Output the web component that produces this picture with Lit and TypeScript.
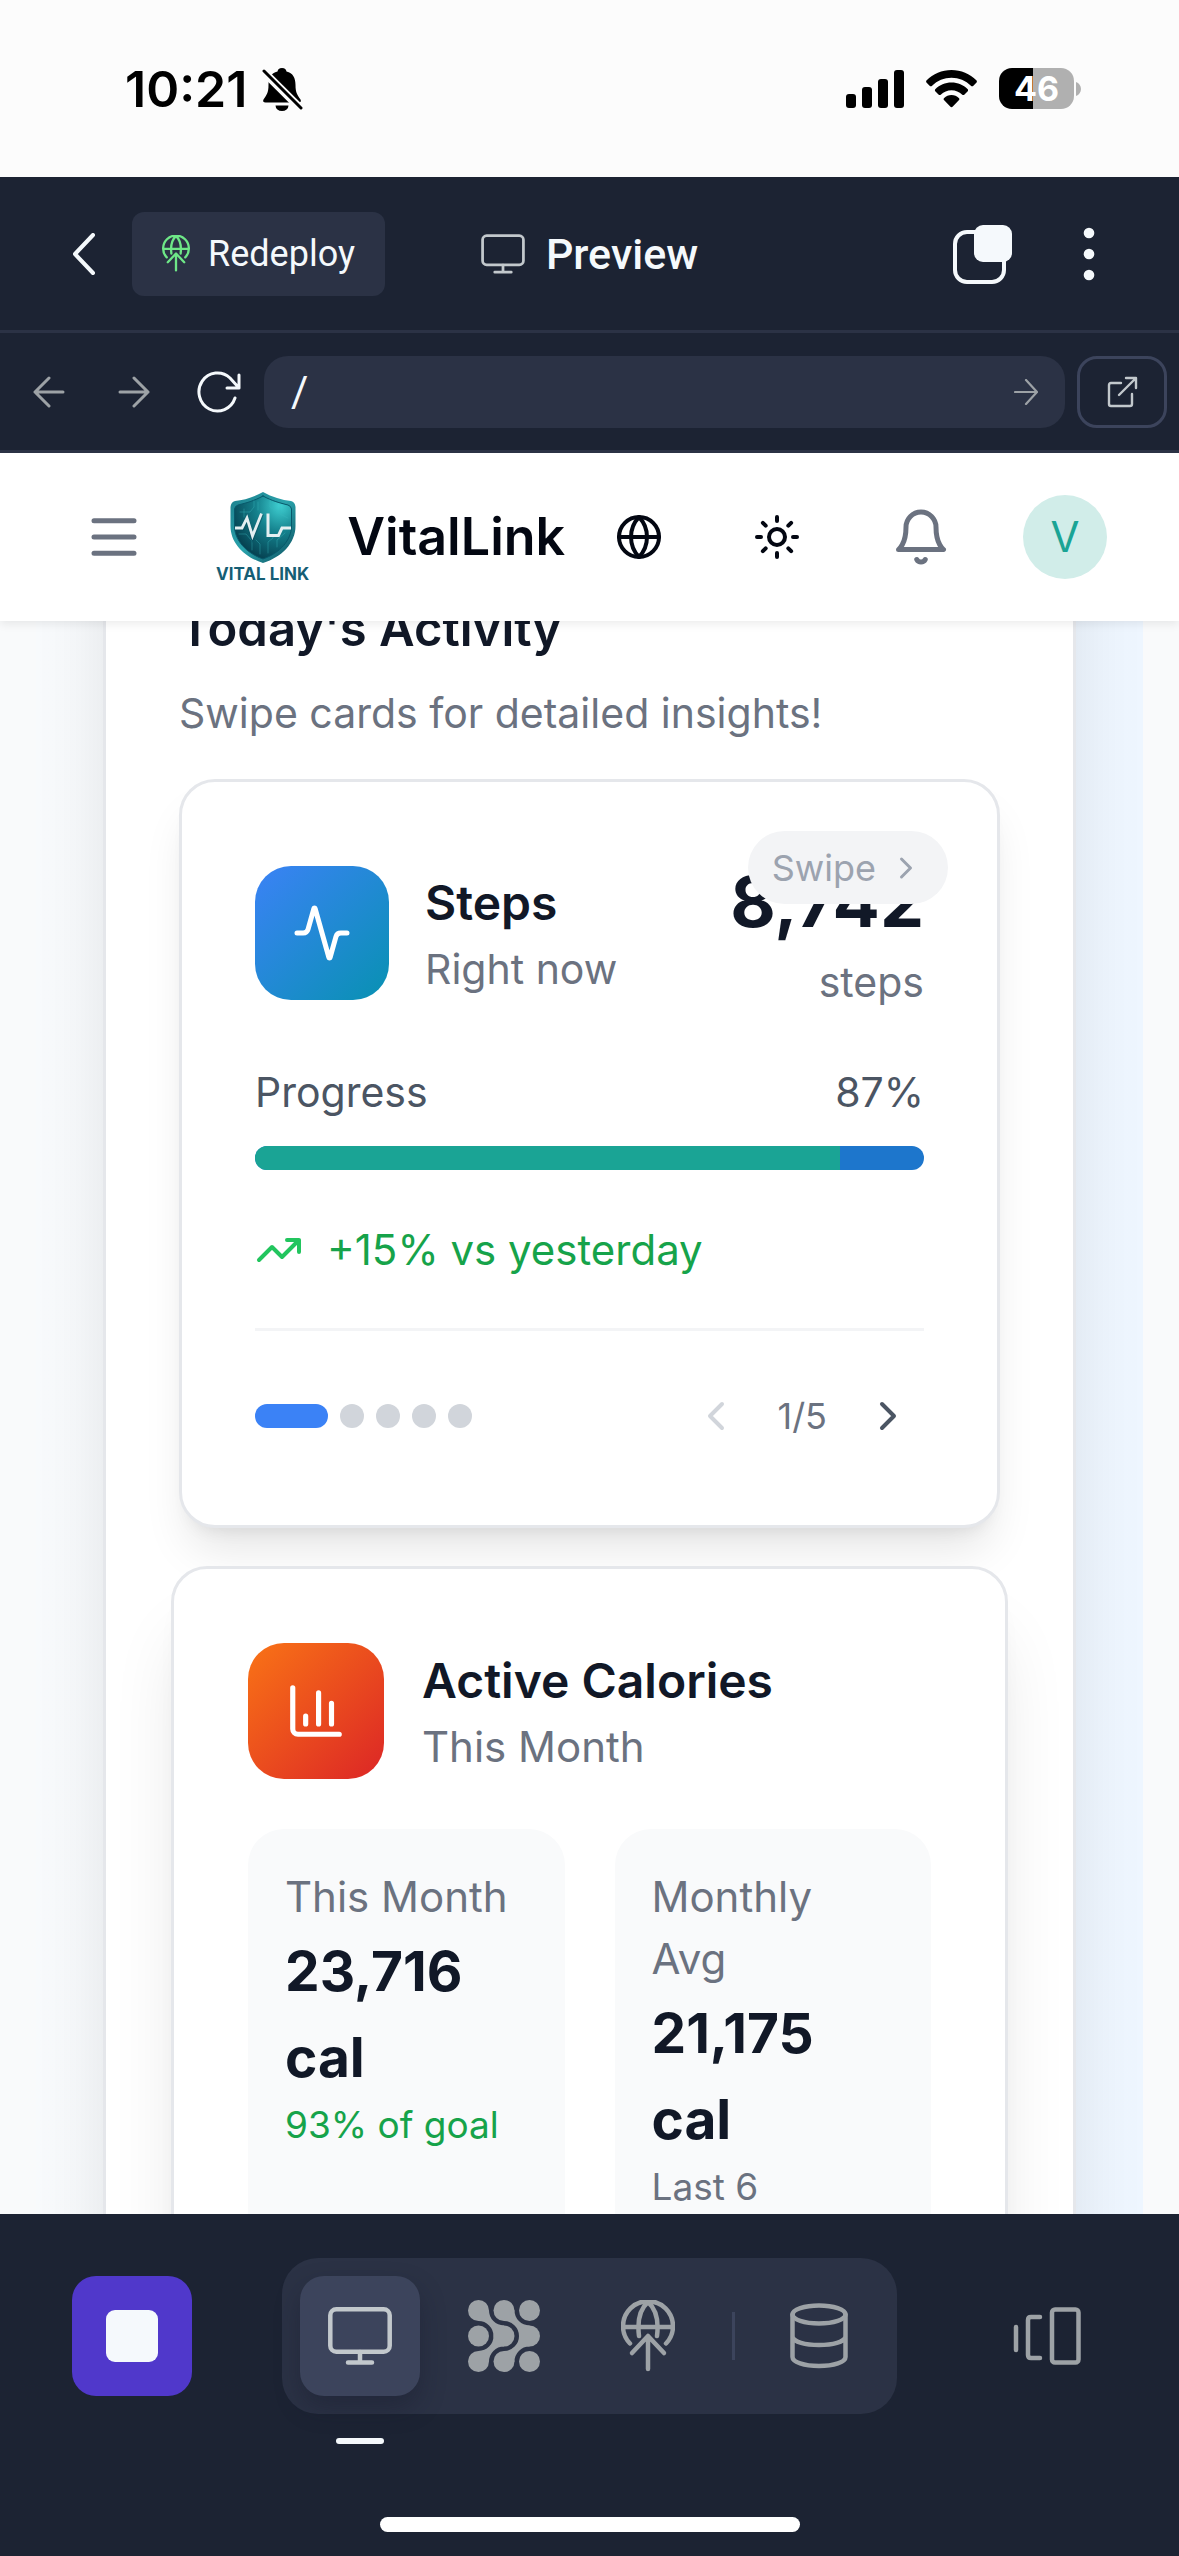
import { LitElement, html, css, svg } from "lit";
import { customElement, property, state } from "lit/decorators.js";
import { classMap } from "lit/directives/class-map.js";

const deployGlyph = svg`
  <path d="M9 43.500A25 25 0 1 1 45 43.500M2 27H52M27 2C19 9 16 20 18 36M27 2C35 9 38 20 36 36"/>
  <path d="M27 38V69M11 53L27 36L43 53"/>
`;

const monitorGlyph = svg`
  <rect x="2.300" y="2.300" width="59.400" height="42.400" rx="6"/>
  <path d="M32 45V55M20 55.500H44"/>
`;

/** Operating system clock, signal and battery line. */
@customElement("status-line")
export class StatusLine extends LitElement {
  @property() time = "10:21";
  @property({ type: Number }) battery = 46;

  static styles = css`
    :host { display: block; background: #fcfcfc; color: #000; font-family: Inter, "Liberation Sans", sans-serif; }
    .bar { display: flex; align-items: center; justify-content: space-between; height: 177px; padding: 0 98px 0 125px; box-sizing: border-box; }
    .side { display: flex; align-items: center; }
    .clock { font-size: 50px; line-height: 60px; font-weight: 600; }
    .mute { margin-left: 14px; }
    .signals { gap: 22px; }
    .cell { display: flex; align-items: center; gap: 2px; }
    .charge { width: 75px; height: 41px; border-radius: 13px; color: #fff; font-size: 34px; line-height: 41px; font-weight: 700; text-align: center; }
    svg { display: block; }
  `;

  render() {
    const edge = `${this.battery}%`;
    return html`
      <div class="bar">
        <div class="side">
          <span class="clock">${this.time}</span>
          <svg class="mute" width="42" height="44" viewBox="0 0 42 44" aria-hidden="true">
            <path d="M21 1c-3 0-4 1.500-4.500 3.500C10 6 7.500 11 7.500 18c0 8-2 10-5 14.500-1 2 0 3 2 3h33c2 0 3-1 2-3-3-4.500-5-6.500-5-14.500 0-7-2.500-12-9-13.500C25 2.500 24 1 21 1zM14.500 38.500a6.500 5.500 0 0 0 13 0z"/>
            <path d="M2 4L40 42" stroke="#fcfcfc" stroke-width="8"/>
            <path d="M3 4L40 41" stroke="#000" stroke-width="3" stroke-linecap="round"/>
          </svg>
        </div>
        <div class="side signals">
          <svg width="58" height="38" viewBox="0 0 58 38" aria-hidden="true">
            <rect x="0" y="24" width="10" height="14" rx="3"/>
            <rect x="16" y="17" width="10" height="21" rx="3"/>
            <rect x="32" y="9" width="10" height="29" rx="3"/>
            <rect x="48" y="0" width="10" height="38" rx="3"/>
          </svg>
          <svg width="51" height="38" viewBox="0 0 51 38" aria-hidden="true">
            <path d="M25.500 0C35 0 44 4 50.300 10.300c.8.800.8 1.700 0 2.500l-2.900 2.900c-.8.800-1.700.8-2.500 0C39.700 10.500 32.900 7.700 25.500 7.700S11.300 10.500 6.100 15.700c-.8.800-1.700.8-2.500 0L.7 12.800c-.8-.8-.8-1.700 0-2.500C7 4 16 0 25.500 0z"/>
            <path d="M25.500 12.500c6.300 0 12 2.500 16 6.500.8.800.8 1.700 0 2.500l-3 3c-.8.800-1.700.8-2.500 0-2.700-2.700-6.400-4.300-10.500-4.300S17.700 21.800 15 24.500c-.8.800-1.700.8-2.500 0l-3-3c-.8-.8-.8-1.700 0-2.500 4-4 9.700-6.500 16-6.500z"/>
            <path d="M25.500 25c2.900 0 5.400 1 7.300 2.900.8.800.8 1.600 0 2.400l-6 6.300c-.8.900-1.800.9-2.600 0l-6-6.300c-.8-.8-.8-1.600 0-2.400C20.100 26 22.600 25 25.500 25z"/>
          </svg>
          <div class="cell">
            <div class="charge" style="background:linear-gradient(90deg,#000 ${edge},#b0b0b0 ${edge})">${this.battery}</div>
            <svg width="5" height="14" viewBox="0 0 5 14" aria-hidden="true"><path fill="#b0b0b0" d="M0 0C3 1 5 4 5 7S3 13 0 14z"/></svg>
          </div>
        </div>
      </div>
    `;
  }
}

/** Workspace title row and browser address row. */
@customElement("preview-chrome")
export class PreviewChrome extends LitElement {
  @state() private path = "/";

  static styles = css`
    :host { display: block; background: #1c2333; color: #f5f9fc; font-family: Roboto, "Liberation Sans", sans-serif; }
    button, input, a { font: inherit; color: inherit; margin: 0; padding: 0; border: 0; background: none; }
    button { display: flex; align-items: center; justify-content: center; cursor: pointer; }
    svg { display: block; fill: none; stroke: currentColor; stroke-linecap: round; stroke-linejoin: round; }
    .titles { display: grid; grid-template-columns: 1fr auto 1fr; align-items: center; height: 156px; box-sizing: border-box; padding: 0 72px; border-bottom: 3px solid #2b3245; }
    .lead { display: flex; align-items: center; gap: 36px; }
    .redeploy { gap: 18px; height: 84px; padding: 0 30px; border-radius: 12px; background: #2b3245; font-size: 36px; line-height: 48px; }
    .redeploy svg { color: #6ee787; }
    .title { display: flex; align-items: center; gap: 21px; margin: 0; font-size: 43px; line-height: 54px; font-weight: 500; }
    .title svg { color: #c2c8cc; }
    .tail { display: flex; align-items: center; justify-content: flex-end; gap: 70px; padding-right: 12px; }
    .address { display: flex; align-items: center; height: 120px; box-sizing: border-box; padding: 0 12px 0 6px; border-bottom: 3px solid #2b3245; }
    .nav { width: 85px; height: 72px; }
    .dim { color: #9da2a6; }
    .field { flex: 1; display: flex; align-items: center; height: 72px; margin: 0 12px 0 3px; border-radius: 24px; background: #2b3245; }
    .path { flex: 1; min-width: 0; height: 72px; padding-left: 27px; font-size: 42px; outline: none; }
    .go { width: 78px; height: 72px; }
    .open { display: flex; align-items: center; justify-content: center; width: 90px; height: 72px; box-sizing: border-box; border: 3px solid #3c445c; border-radius: 20px; color: #c2c8cc; }
  `;

  render() {
    return html`
      <header class="titles">
        <div class="lead">
          <button aria-label="Back"><svg width="24" height="42" viewBox="0 0 24 42" stroke-width="4"><path d="M21 2L3 21L21 40"/></svg></button>
          <button class="redeploy">
            <svg width="28" height="37" viewBox="0 0 54 72" stroke-width="4.500">${deployGlyph}</svg>
            Redeploy
          </button>
        </div>
        <h1 class="title">
          <svg width="44" height="40" viewBox="0 0 64 58" stroke-width="4">${monitorGlyph}</svg>
          Preview
        </h1>
        <div class="tail">
          <button aria-label="Windows">
            <svg width="60" height="60" viewBox="0 0 60 60">
              <rect x="2" y="8" width="49" height="50" rx="12" stroke-width="4"/>
              <rect x="21" y="1" width="38" height="37" rx="9" fill="currentColor" stroke="none"/>
            </svg>
          </button>
          <button aria-label="More">
            <svg width="12" height="54" viewBox="0 0 12 54">
              <g fill="currentColor" stroke="none"><circle cx="6" cy="6" r="5.300"/><circle cx="6" cy="27" r="5.300"/><circle cx="6" cy="48" r="5.300"/></g>
            </svg>
          </button>
        </div>
      </header>
      <nav class="address">
        <button class="nav dim" aria-label="Go back"><svg width="32" height="32" viewBox="0 0 32 32" stroke-width="3"><path d="M30 16H2M16 2L2 16L16 30"/></svg></button>
        <button class="nav dim" aria-label="Go forward"><svg width="32" height="32" viewBox="0 0 32 32" stroke-width="3"><path d="M2 16H30M16 2L30 16L16 30"/></svg></button>
        <button class="nav" aria-label="Reload"><svg width="44" height="42" viewBox="0 0 44 42" stroke-width="3"><path d="M38 27A18.500 19 0 1 1 33 7L42 17M42 4V17H30"/></svg></button>
        <form class="field" @submit=${(e: Event) => e.preventDefault()}>
          <input class="path" aria-label="Path" .value=${this.path} @input=${(e: Event) => (this.path = (e.target as HTMLInputElement).value)} />
          <button class="go dim" aria-label="Go"><svg width="24" height="26" viewBox="0 0 24 26" stroke-width="2.200"><path d="M1 13H23M12 1L23 13L12 25"/></svg></button>
        </form>
        <a class="open" href="/" aria-label="Open in new tab"><svg width="32" height="32" viewBox="0 0 32 32" stroke-width="2.400"><path d="M15 7H5Q3 7 3 9V28Q3 30 5 30H24Q26 30 26 28V18M13 19L30 2M20 2H30V12"/></svg></a>
      </nav>
    `;
  }
}

/** Tool switcher at the foot of the workspace. */
@customElement("tool-dock")
export class ToolDock extends LitElement {
  @state() private active = "preview";

  static styles = css`
    :host { display: block; background: #1c2333; color: #9da2a6; }
    button { display: flex; align-items: center; justify-content: center; width: 120px; height: 120px; margin: 0; padding: 0; border: 0; border-radius: 24px; background: none; color: inherit; cursor: pointer; }
    svg { display: block; fill: none; stroke: currentColor; stroke-width: 4.500px; stroke-linecap: round; stroke-linejoin: round; }
    .row { display: flex; align-items: center; gap: 90px; padding: 44px 72px 0; }
    .stop { background: #5038cb; }
    .stop svg { fill: #f5f9fc; stroke: none; }
    .tabs { display: flex; align-items: center; gap: 24px; padding: 18px; border-radius: 36px; background: #2b3245; }
    .tab { position: relative; }
    .tab.on { background: #3c445c; color: #c2c8cc; box-shadow: 0 12px 24px rgba(20, 24, 40, 0.35); }
    .tab.on::after { content: ""; position: absolute; left: 36px; right: 36px; bottom: -48px; height: 6px; border-radius: 3px; background: #f5f9fc; }
    .rule { width: 3px; height: 48px; background: #3c445c; }
    .layout { margin-left: auto; }
    .home { width: 420px; max-width: 60%; height: 15px; border-radius: 8px; background: #fff; margin: 103px auto 24px; }
    .solid { fill: currentColor; stroke: none; }
  `;

  private tab(id: string, label: string, art: unknown) {
    return html`<button class=${classMap({ tab: true, on: this.active === id })} aria-label=${label} @click=${() => (this.active = id)}>${art}</button>`;
  }

  render() {
    return html`
      <div class="row">
        <button class="stop" aria-label="Stop"><svg width="52" height="52" viewBox="0 0 52 52"><rect width="52" height="52" rx="9"/></svg></button>
        <div class="tabs">
          ${this.tab("preview", "Preview", html`<svg width="64" height="58" viewBox="0 0 64 58">${monitorGlyph}</svg>`)}
          ${this.tab("agent", "Agent", html`
            <svg class="solid" width="72" height="72" viewBox="0 0 72 72">
              <circle cx="10.500" cy="10.500" r="10.500"/><circle cx="36" cy="10.500" r="10.500"/><circle cx="61.500" cy="10.500" r="10.500"/>
              <circle cx="10.500" cy="36" r="10.500"/><circle cx="36" cy="36" r="10.500"/><circle cx="61.500" cy="36" r="10.500"/>
              <circle cx="10.500" cy="61.500" r="10.500"/><circle cx="36" cy="61.500" r="10.500"/><circle cx="61.500" cy="61.500" r="10.500"/>
              <path d="M10.500 10.500H21A15 15 0 0 0 36 25.500V36H25.500A15 15 0 0 0 10.500 21z"/>
              <path d="M36 10.500H46.500A15 15 0 0 0 61.500 25.500V36H51A15 15 0 0 0 36 21z"/>
              <path d="M10.500 61.500H21A15 15 0 0 1 36 46.500V36H25.500A15 15 0 0 1 10.500 51z"/>
              <path d="M36 61.500H46.500A15 15 0 0 1 61.500 46.500V36H51A15 15 0 0 1 36 51z"/>
            </svg>`)}
          ${this.tab("deploy", "Deployments", html`<svg width="54" height="72" viewBox="0 0 54 72">${deployGlyph}</svg>`)}
          <span class="rule"></span>
          ${this.tab("data", "Database", html`
            <svg width="58" height="66" viewBox="0 0 58 66">
              <ellipse cx="29" cy="11.500" rx="26.500" ry="9"/>
              <path d="M2.500 11.500V54C2.500 59 14 63 29 63S55.500 59 55.500 54V11.500M2.500 34C4 39 15 42 29 42S54 39 55.500 34"/>
            </svg>`)}
        </div>
        <button class="layout" aria-label="Switch panel">
          <svg width="68" height="58" viewBox="0 0 68 58"><path d="M3 20V43M27 10H18Q15 10 15 13V48Q15 51 18 51H27"/><rect x="39" y="2.500" width="26.500" height="53" rx="3"/></svg>
        </button>
      </div>
      <div class="home"></div>
    `;
  }
}

interface Stat {
  label: string;
  value: string;
  note: string;
  good?: boolean;
}

const monthly: Stat[] = [
  { label: "This Month", value: "23,716 cal", note: "93% of goal", good: true },
  { label: "Monthly Avg", value: "21,175 cal", note: "Last 6 months" },
];

@customElement("app-root")
export class AppRoot extends LitElement {
  @property({ type: Number }) steps = 8742;
  @property({ type: Number }) goal = 10000;
  @state() private slide = 0;

  static styles = css`
    :host { display: flex; flex-direction: column; height: 100vh; overflow: hidden; font-family: Inter, "Liberation Sans", sans-serif; color: #111827; background: #1c2333; }
    button, a { font: inherit; color: inherit; margin: 0; padding: 0; border: 0; background: none; cursor: pointer; text-decoration: none; }
    svg { display: block; fill: none; stroke: currentColor; stroke-width: 2px; stroke-linecap: round; stroke-linejoin: round; }
    h2, h3, p { margin: 0; }
    .app { flex: 1; min-height: 0; display: flex; flex-direction: column; background: #f9fafb; overflow: hidden; }

    .top { position: relative; z-index: 2; display: flex; align-items: center; flex: none; height: 168px; padding: 0 72px 0 84px; background: #fff; box-shadow: 0 3px 9px rgba(0, 0, 0, 0.08); color: #030712; }
    .muted { color: #6b7280; }
    .brand { display: flex; align-items: center; gap: 38px; margin-left: 72px; font-size: 52px; line-height: 66px; font-weight: 600; }
    .mark { display: flex; flex-direction: column; align-items: center; gap: 2px; color: #155e75; font-size: 17px; line-height: 18px; font-weight: 700; }
    .mark svg { stroke: none; }
    .actions { display: flex; align-items: center; gap: 90px; margin-left: auto; }
    .person { display: flex; align-items: center; gap: 72px; }
    .avatar { width: 84px; height: 84px; border-radius: 42px; background: #d1ede9; color: #1aa495; font-size: 42px; line-height: 84px; text-align: center; }

    .scroll { flex: 1; min-height: 0; overflow: hidden; padding: 0 36px; }
    .stage { padding: 0 67px; background: linear-gradient(90deg, #f8fafc, #eef6ff); }
    .panel { margin-top: -99px; padding: 74px 73px 72px; background: #fff; border: 3px solid #e5e7eb; box-shadow: 0 0 72px -6px rgba(0, 0, 0, 0.1); }
    .heading { font-size: 49px; line-height: 60px; font-weight: 600; }
    .body { font-size: 41px; line-height: 60px; color: #6b7280; }
    .intro { margin: 24px 0 36px; }

    .card { position: relative; background: #fff; border: 3px solid #e5e7eb; border-radius: 36px; padding: 72px 73px; box-shadow: 0 30px 45px -9px rgba(0, 0, 0, 0.1), 0 12px 18px -12px rgba(0, 0, 0, 0.1); }
    .raised { margin: 38px -8px 0; padding: 74px; box-shadow: 0 60px 75px -15px rgba(0, 0, 0, 0.12), 0 24px 30px -18px rgba(0, 0, 0, 0.1); }
    .raised .head { gap: 38px; }
    .raised .body { font-size: 42px; }
    .head { display: flex; align-items: center; gap: 36px; }
    .badge { display: flex; align-items: center; justify-content: center; flex: none; width: 134px; height: 134px; border-radius: 36px; color: #fff; }
    .blue { background: linear-gradient(135deg, #3b82f6, #0891b2); }
    .warm { width: 136px; height: 136px; background: linear-gradient(135deg, #f97316, #dc2626); }
    .name { font-size: 48px; line-height: 72px; font-weight: 600; }
    .total { margin-left: auto; display: flex; flex-direction: column; gap: 2px; text-align: right; }
    .figure { font-size: 70px; line-height: 96px; font-weight: 700; }
    .hint { position: absolute; top: 49px; right: 49px; display: flex; align-items: center; gap: 12px; height: 73px; padding: 0 24px; border-radius: 37px; background: #f3f4f6; color: #9ca3af; font-size: 36px; line-height: 48px; }

    .split { display: flex; justify-content: space-between; margin: 50px 0 24px; font-size: 41px; line-height: 60px; color: #4b5563; }
    .track { height: 24px; border-radius: 12px; overflow: hidden; background: #1d76cc; }
    .fill { height: 100%; background: #1aa495; }
    .trend { display: flex; align-items: center; gap: 24px; margin: 50px 0 48px; color: #16a34a; font-size: 42px; line-height: 60px; }
    .trend svg { color: #22c55e; }
    .foot { display: flex; align-items: center; justify-content: space-between; padding-top: 48px; border-top: 3px solid #f3f4f6; }
    .dots { display: flex; gap: 12px; }
    .dots .dot { width: 24px; height: 24px; border-radius: 12px; background: #d1d5db; }
    .dots .dot.on { width: 73px; background: #3b82f6; }
    .pager { display: flex; align-items: center; gap: 25px; color: #6b7280; font-size: 36px; line-height: 48px; }
    .pager button { display: flex; align-items: center; justify-content: center; width: 72px; height: 74px; color: #4b5563; }
    .pager button:disabled { color: #d1d5db; }

    .stats { display: grid; grid-template-columns: 1fr 1fr; gap: 50px; margin-top: 50px; }
    .stat { padding: 37px; border-radius: 36px; background: #f9fafb; }
    .stat .label { font-size: 42px; line-height: 62px; color: #6b7280; }
    .stat .value { font-size: 55px; line-height: 86px; font-weight: 700; }
    .stat .note { font-size: 37px; line-height: 50px; color: #6b7280; }
    .stat .note.good { color: #16a34a; }
    tool-dock, status-line, preview-chrome { flex: none; }
  `;

  private move(step: number) {
    this.slide = Math.min(4, Math.max(0, this.slide + step));
  }

  private renderTop() {
    return html`
      <header class="top">
        <button class="muted" aria-label="Menu"><svg width="60" height="60" viewBox="0 0 24 24"><path d="M4 5.500H20M4 12H20M4 18.500H20"/></svg></button>
        <a class="brand" href="/">
          <span class="mark">
            <svg width="66" height="71" viewBox="0 0 66 71" aria-hidden="true">
              <defs>
                <linearGradient id="rim" x1="0" y1="0" x2="1" y2="1"><stop offset="0" stop-color="#1c7f8c"/><stop offset=".5" stop-color="#2aa3ac"/><stop offset="1" stop-color="#0b4c5c"/></linearGradient>
                <radialGradient id="core" cx=".8" cy=".15" r=".95"><stop offset="0" stop-color="#3fd0d2"/><stop offset=".45" stop-color="#14808c"/><stop offset="1" stop-color="#043c4c"/></radialGradient>
              </defs>
              <path fill="url(#rim)" d="M33 0C42 5 52 8 61 9Q65 10 65.500 15V34C65.500 51 52 65 33 71C14 65 .5 51 .5 34V15Q1 10 5 9C14 8 24 5 33 0z"/>
              <path fill="url(#core)" stroke="#07586a" stroke-width="1" d="M33 4C42 9 50 11 58 13Q61 14 61.500 17V34C61.500 48 50 61 33 67C16 61 4.500 48 4.500 34V17Q5 14 8 13C16 11 24 9 33 4z"/>
              <g fill="none" stroke="#3db8bf" stroke-width=".7" opacity=".55"><path d="M10 20H20L24 15V9M14 25V17M9 42H16L22 49V58M30 62V52L26 48M38 61V50L43 46V42M47 55V48L55 41M40 8V15L46 19H56M50 12V22L58 26M28 10V18"/></g>
              <g fill="none" stroke-linejoin="miter" stroke-linecap="butt">
                <path d="M5 37H12L17 27L22.500 45L32 22" stroke="#06495a" stroke-width="4" opacity=".5"/>
                <path d="M5 36H12L17 26L22.500 44L31.500 21.500" stroke="#e3eff1" stroke-width="2.800"/>
                <path d="M38 21.500V43.500H48.500L52 36H61" stroke="#e3eff1" stroke-width="3"/>
              </g>
            </svg>
            VITAL LINK
          </span>
          VitalLink
        </a>
        <div class="actions">
          <button aria-label="Language"><svg width="48" height="48" viewBox="0 0 24 24"><circle cx="12" cy="12" r="10"/><path d="M12 2a14.500 14.500 0 0 0 0 20 14.500 14.500 0 0 0 0-20M2 12h20"/></svg></button>
          <button aria-label="Theme"><svg width="48" height="48" viewBox="0 0 24 24"><circle cx="12" cy="12" r="4"/><path d="M12 2v2M12 20v2M4.930 4.930l1.410 1.410M17.660 17.660l1.410 1.410M2 12h2M20 12h2M6.340 17.660l-1.410 1.410M19.070 4.930l-1.410 1.410"/></svg></button>
          <div class="person">
            <button class="muted" aria-label="Notifications"><svg width="60" height="60" viewBox="0 0 24 24"><path d="M6 8a6 6 0 0 1 12 0c0 7 3 9 3 9H3s3-2 3-9M10.300 21a1.940 1.940 0 0 0 3.400 0"/></svg></button>
            <button class="avatar" aria-label="Profile">V</button>
          </div>
        </div>
      </header>
    `;
  }

  private renderSteps() {
    const percent = (this.steps / this.goal) * 100;
    return html`
      <article class="card">
        <div class="head">
          <span class="badge blue"><svg width="60" height="60" viewBox="0 0 24 24"><path d="M22 12h-2.480a2 2 0 0 0-1.930 1.460l-2.350 8.360a.25.25 0 0 1-.48 0L9.240 2.180a.25.25 0 0 0-.48 0l-2.350 8.360A2 2 0 0 1 4.490 12H2"/></svg></span>
          <div>
            <h3 class="name">Steps</h3>
            <p class="body">Right now</p>
          </div>
          <div class="total">
            <span class="figure">${this.steps.toLocaleString("en-US")}</span>
            <span class="body">steps</span>
          </div>
        </div>
        <div class="hint">Swipe <svg width="36" height="36" viewBox="0 0 24 24"><path d="M9 18l6-6-6-6"/></svg></div>
        <div class="split"><span>Progress</span><span>${Math.round(percent)}%</span></div>
        <div class="track" role="progressbar" aria-label="Progress" aria-valuenow=${Math.round(percent)} aria-valuemin="0" aria-valuemax="100">
          <div class="fill" style="width:${percent}%"></div>
        </div>
        <div class="trend">
          <svg width="48" height="48" viewBox="0 0 24 24"><path d="M22 7L13.500 15.500L8.500 10.500L2 17M16 7H22V13"/></svg>
          +15% vs yesterday
        </div>
        <div class="foot">
          <div class="dots">
            ${[0, 1, 2, 3, 4].map((i) => html`<button class=${classMap({ dot: true, on: i === this.slide })} aria-label="Card ${i + 1}" @click=${() => (this.slide = i)}></button>`)}
          </div>
          <div class="pager">
            <button aria-label="Previous" ?disabled=${this.slide === 0} @click=${() => this.move(-1)}><svg width="48" height="48" viewBox="0 0 24 24"><path d="M15 18l-6-6 6-6"/></svg></button>
            <span>${this.slide + 1}/5</span>
            <button aria-label="Next" ?disabled=${this.slide === 4} @click=${() => this.move(1)}><svg width="48" height="48" viewBox="0 0 24 24"><path d="M9 18l6-6-6-6"/></svg></button>
          </div>
        </div>
      </article>
    `;
  }

  private renderCalories() {
    return html`
      <article class="card raised">
        <div class="head">
          <span class="badge warm"><svg width="62" height="62" viewBox="0 0 24 24"><path d="M3 3v16a2 2 0 0 0 2 2h16M18 17V9M13 17V5M8 17v-3"/></svg></span>
          <div>
            <h3 class="name">Active Calories</h3>
            <p class="body">This Month</p>
          </div>
        </div>
        <div class="stats">
          ${monthly.map((s) => html`
            <section class="stat">
              <p class="label">${s.label}</p>
              <p class="value">${s.value}</p>
              <p class=${classMap({ note: true, good: !!s.good })}>${s.note}</p>
            </section>`)}
        </div>
      </article>
    `;
  }

  render() {
    return html`
      <status-line></status-line>
      <preview-chrome></preview-chrome>
      <div class="app">
        ${this.renderTop()}
        <main class="scroll">
          <div class="stage">
            <section class="panel">
              <h2 class="heading">Today's Activity</h2>
              <p class="body intro">Swipe cards for detailed insights!</p>
              ${this.renderSteps()} ${this.renderCalories()}
            </section>
          </div>
        </main>
      </div>
      <tool-dock></tool-dock>
    `;
  }
}
